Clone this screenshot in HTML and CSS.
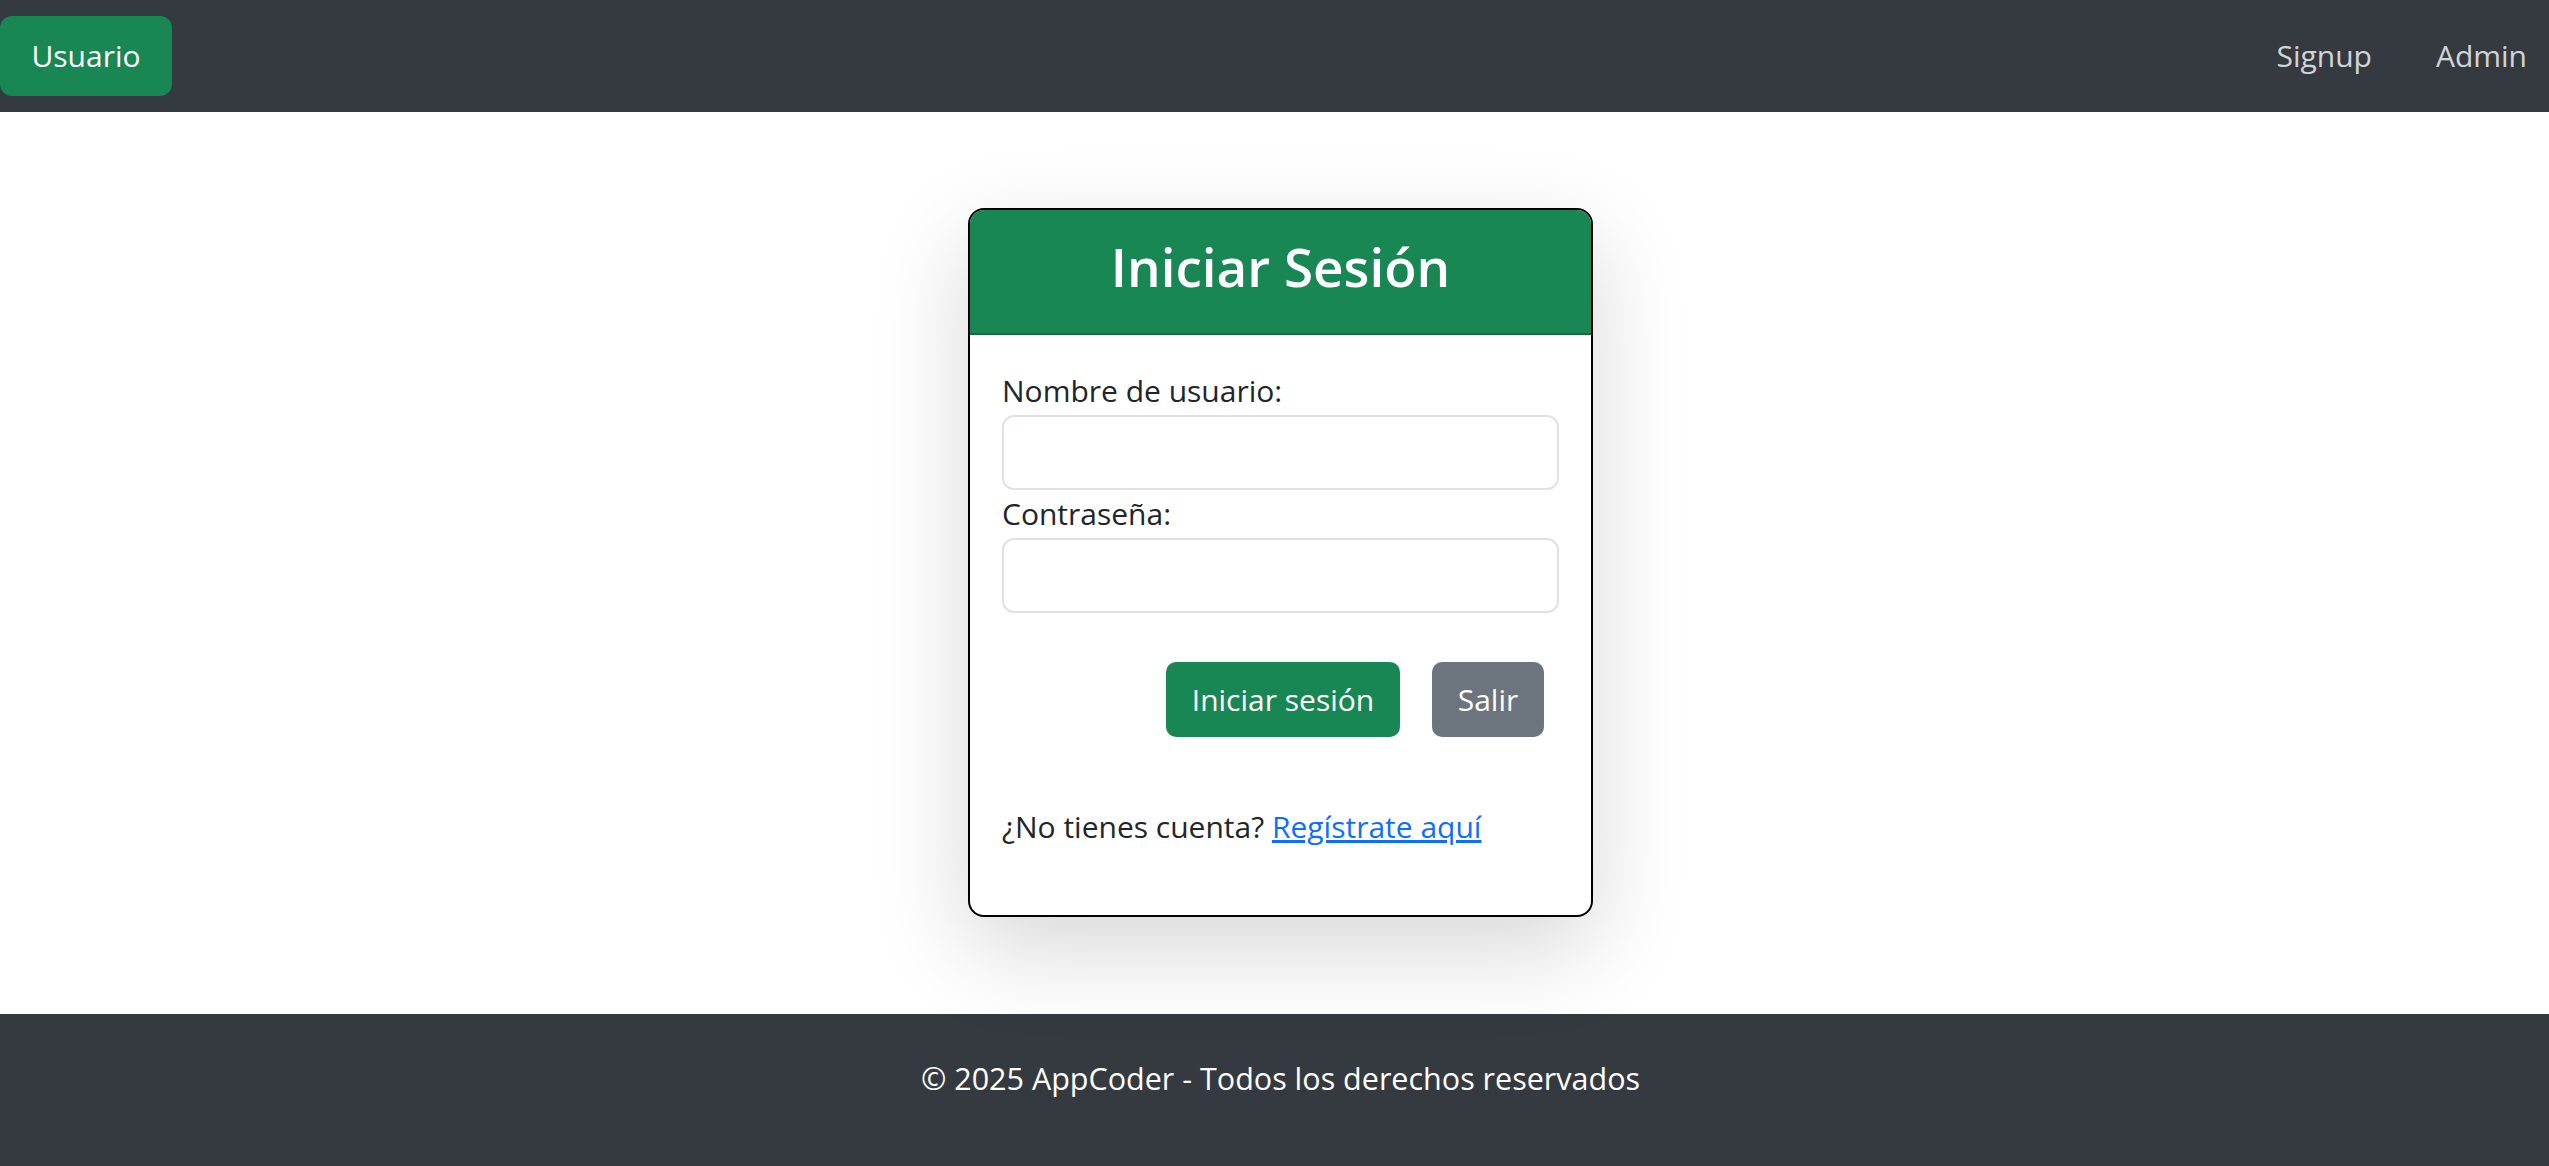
FILE: index.html
```html
<!DOCTYPE html>
<html lang="es">
<head>
<meta charset="utf-8">
<title>Iniciar Sesión</title>
<link rel="stylesheet" href="styles.css">
</head>
<body>
<nav class="navbar">
  <a class="brand-btn" href="#">Usuario</a>
  <div class="nav-links">
    <a class="nav-link" href="#">Signup</a>
    <a class="nav-link" href="#">Admin</a>
  </div>
</nav>
<main class="main">
  <div class="card">
    <div class="card-header">
      <h2 class="card-title">Iniciar Sesión</h2>
    </div>
    <div class="card-body">
      <form class="form">
        <label class="label" for="u">Nombre de usuario:</label>
        <input class="input" id="u" type="text">
        <label class="label" for="p">Contraseña:</label>
        <input class="input" id="p" type="password">
        <div class="actions">
          <button class="btn btn-success" type="button">Iniciar sesión</button>
          <button class="btn btn-secondary" type="button">Salir</button>
        </div>
      </form>
      <p class="signup">¿No tienes cuenta? <a href="#" class="link">Regístrate aquí</a></p>
    </div>
  </div>
</main>
<footer class="footer">
  <p class="footer-text">© 2025 AppCoder - Todos los derechos reservados</p>
</footer>
</body>
</html>
```
FILE: styles.css
```css
* { box-sizing: border-box; }
html, body { margin: 0; padding: 0; }
body {
  font-family: "Open Sans", "Noto Sans", sans-serif;
  font-size: 30px;
  line-height: 48px;
  color: #212529;
  background: #fff;
}
.navbar {
  height: 112px;
  background: #343a40;
  display: flex;
  align-items: center;
  justify-content: space-between;
  padding: 0 22px 0 0;
}
.brand-btn {
  display: inline-flex;
  align-items: center;
  justify-content: center;
  width: 172px;
  height: 80px;
  background: #198754;
  color: #fff;
  text-decoration: none;
  border-radius: 12px;
}
.nav-links {
  display: flex;
  gap: 64px;
}
.nav-link {
  color: rgba(255,255,255,0.8);
  text-decoration: none;
}
.main {
  padding: 96px 0 97px 12px;
  display: flex;
  justify-content: center;
}
.card {
  width: 625px;
  border: 2px solid #000;
  border-radius: 16px;
  overflow: hidden;
  background: #fff;
  box-shadow: 0 32px 96px rgba(0,0,0,0.16);
}
.card-header {
  height: 125px;
  background: #198754;
  border-bottom: 2px solid #146c43;
  display: flex;
  align-items: center;
  justify-content: center;
  padding-bottom: 10px;
}
.card-title {
  margin: 0;
  color: #fff;
  font-size: 53px;
  font-weight: 600;
  line-height: 64px;
}
.card-body {
  padding: 32px;
}
.form {
  display: flex;
  flex-direction: column;
}
.label {
  display: block;
  height: 48px;
}
.input {
  display: block;
  width: 100%;
  height: 75px;
  border: 2px solid #dee2e6;
  border-radius: 12px;
  background: #fff;
  font: inherit;
}
.actions {
  display: flex;
  justify-content: flex-end;
  gap: 32px;
  margin: 49px 15px 0 0;
}
.btn {
  height: 75px;
  padding: 0;
  border: none;
  border-radius: 10px;
  color: #fff;
  font: inherit;
  line-height: 75px;
  white-space: nowrap;
  text-align: center;
}
.btn-success { background: #198754; width: 234px; }
.btn-secondary { background: #6c757d; width: 112px; }
.signup {
  margin: 66px 0 32px 0;
}
.link {
  color: #0d6efd;
  text-decoration: underline;
}
.footer {
  height: 152px;
  background: #343a40;
  display: flex;
  align-items: center;
  justify-content: center;
  padding-left: 12px;
}
.footer-text {
  margin: 0;
  color: #fff;
  font-size: 30.5px;
  position: relative;
  top: -12px;
}
```
